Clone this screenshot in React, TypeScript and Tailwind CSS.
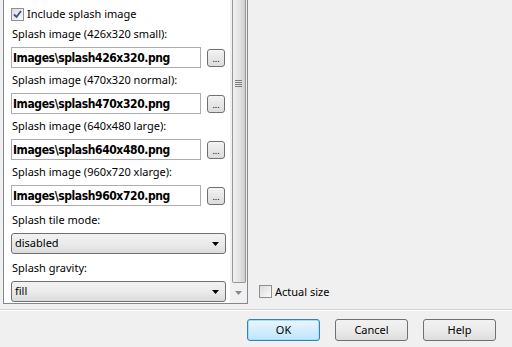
import React from "react";

const files = [
  { label: "Splash image (426x320 small):", value: "Images\\splash426x320.png" },
  { label: "Splash image (470x320 normal):", value: "Images\\splash470x320.png" },
  { label: "Splash image (640x480 large):", value: "Images\\splash640x480.png" },
  { label: "Splash image (960x720 xlarge):", value: "Images\\splash960x720.png" },
];

function CheckBox({ checked }: { checked?: boolean }) {
  return (
    <span className="w-[13px] h-[13px] border border-[#8e8f8f] bg-gradient-to-br from-[#dcdcdc] to-[#fbfbfb] flex items-center justify-center shrink-0">
      {checked ? (
        <svg width="9" height="9" viewBox="0 0 9 9">
          <path d="M1 4.5 L3.5 7 L8 1" stroke="#3d4f8f" strokeWidth="1.8" fill="none" />
        </svg>
      ) : null}
    </span>
  );
}

function FileRow({ label, value }: { label: string; value: string }) {
  return (
    <div className="flex flex-col">
      <div className="h-[16px] leading-[16px] pl-[1px]">{label}</div>
      <div className="flex items-center mt-[5px] mb-[4px]">
        <div className="w-[190px] h-[21px] border border-[#abadb3] bg-white flex items-center pl-[1px] font-['DejaVu_Sans',sans-serif] [font-stretch:condensed] font-bold text-[12px] tracking-[-0.4px] text-black">
          {value}
        </div>
        <button className="ml-[6px] w-[18px] h-[18px] rounded-[3px] border border-[#707070] bg-gradient-to-b from-[#f3f3f3] to-[#dcdcdc] flex items-end justify-center pb-[3px] text-[9px] leading-none">
          ...
        </button>
      </div>
    </div>
  );
}

function Select({ value }: { value: string }) {
  return (
    <div className="w-[215px] h-[21px] rounded-[3px] border border-[#707070] bg-gradient-to-b from-[#f2f2f2] via-[#ebebeb] to-[#dcdcdc] flex items-center justify-between pl-[3px] pr-[6px]">
      <span>{value}</span>
      <svg width="7" height="4" viewBox="0 0 7 4">
        <path d="M0 0 H7 L3.5 4 Z" fill="#000" />
      </svg>
    </div>
  );
}

function Btn({ children, primary }: { children: React.ReactNode; primary?: boolean }) {
  return (
    <button
      className={
        primary
          ? "w-[73px] h-[22px] rounded-[3px] border border-[#3c7fb1] bg-gradient-to-b from-[#eaf6fd] to-[#bee6fd] shadow-[inset_0_0_0_1px_#9fe0fb]"
          : "w-[73px] h-[22px] rounded-[3px] border border-[#707070] bg-gradient-to-b from-[#f2f2f2] via-[#ebebeb] to-[#dddddd]"
      }
    >
      {children}
    </button>
  );
}

export default function App() {
  return (
    <div className="w-[512px] h-[347px] bg-[#f0f0f0] flex flex-col font-['Noto_Sans',sans-serif] text-[11px] text-black overflow-hidden">
      <div className="flex h-[309px]">
        <div className="ml-[3px] w-[245px] h-[304px] border-x border-b border-[#828790] bg-white flex">
          <div className="flex-1 flex flex-col pl-[7px] pt-[8px]">
            <div className="flex items-center h-[13px]">
              <CheckBox checked />
              <span className="ml-[3px]">Include splash image</span>
            </div>
            <div className="mt-[5px]">
              {files.map((f) => (
                <FileRow key={f.value} label={f.label} value={f.value} />
              ))}
            </div>
            <div className="h-[16px] leading-[16px] pl-[1px] mt-[2px]">Splash tile mode:</div>
            <div className="mt-[5px]">
              <Select value="disabled" />
            </div>
            <div className="h-[16px] leading-[16px] pl-[1px] mt-[6px]">Splash gravity:</div>
            <div className="mt-[5px]">
              <Select value="fill" />
            </div>
          </div>
          <div className="w-[17px] bg-[#f0f0f0] flex flex-col items-center">
            <div className="w-[14px] h-[283px] rounded-b-[2px] border border-t-0 border-[#979797] bg-gradient-to-r from-[#f0f0f0] via-[#e4e4e4] to-[#cfcfcf] flex flex-col items-center pt-[80px]">
              <div className="flex flex-col gap-[1px]">
                <div className="w-[7px] h-[1px] bg-[#7d7d7d]" />
                <div className="w-[7px] h-[1px] bg-[#7d7d7d]" />
                <div className="w-[7px] h-[1px] bg-[#7d7d7d]" />
                <div className="w-[7px] h-[1px] bg-[#7d7d7d]" />
              </div>
            </div>
            <div className="mt-[8px]">
              <svg width="7" height="4" viewBox="0 0 7 4">
                <path d="M0 0 H7 L3.5 4 Z" fill="#8a8a8a" />
              </svg>
            </div>
          </div>
        </div>
        <div className="flex-1 flex items-end pb-[9px] pl-[11px]">
          <div className="flex items-center">
            <CheckBox />
            <span className="ml-[3px]">Actual size</span>
          </div>
        </div>
      </div>
      <div className="h-[1px] bg-[#d5d5d5]" />
      <div className="h-[1px] bg-white" />
      <div className="flex justify-end gap-[15px] pr-[16px] pt-[8px]">
        <Btn primary>OK</Btn>
        <Btn>Cancel</Btn>
        <Btn>Help</Btn>
      </div>
    </div>
  );
}
